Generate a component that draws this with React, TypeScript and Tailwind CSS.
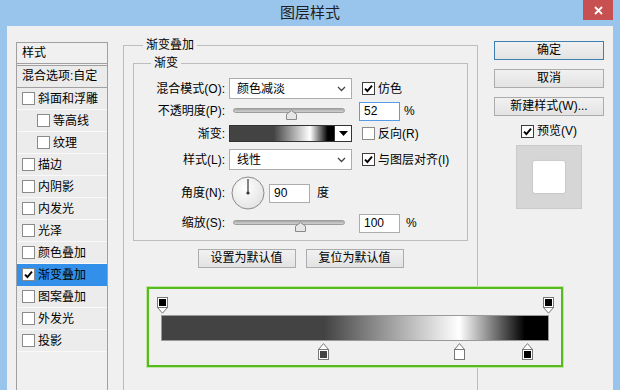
import React from "react";

const GRAD = "bg-[linear-gradient(to_right,#434343_0%,#434343_42%,#ffffff_77%,#000000_94%,#000000_100%)]";

function Check({ on, soft }: { on?: boolean; soft?: boolean }) {
  return (
    <span
      className={
        "inline-flex h-[13px] w-[13px] shrink-0 items-center justify-center border bg-white " +
        (soft ? "border-[#8a8a8a]" : "border-[#3c3c3c]")
      }
    >
      {on && (
        <svg width="9" height="9" viewBox="0 0 9 9">
          <path d="M1 4.6 L3.4 7 L8 1.6" fill="none" stroke="#000" strokeWidth="1.9" />
        </svg>
      )}
    </span>
  );
}

function Select({ value }: { value: string }) {
  return (
    <div className="ml-[4px] flex h-[21px] w-[123px] items-center justify-between border border-[#acacac] bg-white pl-[7px] pr-[5px]">
      <span>{value}</span>
      <svg width="9" height="6" viewBox="0 0 9 6">
        <path d="M1 1 L4.5 4.5 L8 1" fill="none" stroke="#444" strokeWidth="1.3" />
      </svg>
    </div>
  );
}

function Slider({ thumb }: { thumb: number }) {
  return (
    <div className="relative ml-[8px] h-[20px] w-[112px]">
      <div className="absolute left-0 right-0 top-[7px] h-[5px] rounded-full border border-[#9c9c9c] bg-[linear-gradient(#a9a9a9,#d0d0d0)]" />
      <svg className="absolute top-[9px]" style={{ left: thumb }} width="11" height="10" viewBox="0 0 11 10">
        <path d="M0.5 9.5 V4.2 L5.5 0.5 L10.5 4.2 V9.5 Z" fill="#e6e6e6" stroke="#8a8a8a" />
      </svg>
    </div>
  );
}

function Field({ value, focus, ml }: { value: string; focus?: boolean; ml: string }) {
  return (
    <div
      className={
        "flex h-[19px] w-[41px] items-center bg-white pl-[4px] border " +
        ml +
        (focus ? " border-[#569de5]" : " border-[#acacac]")
      }
    >
      {value}
    </div>
  );
}

function Label({ children }: { children: React.ReactNode }) {
  return <div className="w-[91px] shrink-0 text-right">{children}</div>;
}

function Btn({ children, main, w }: { children: React.ReactNode; main?: boolean; w: string }) {
  return (
    <button
      className={
        "h-[19px] border bg-[linear-gradient(#f1f1f1,#e3e3e3)] leading-[17px] text-black " +
        w +
        (main ? " border-[#3c7fb1]" : " border-[#acacac]")
      }
    >
      {children}
    </button>
  );
}

function TopStop({ x }: { x: number }) {
  return (
    <svg className="absolute top-0" style={{ left: x - 5.5 }} width="11" height="17" viewBox="0 0 11 17">
      <path d="M0.5 10.5 H10.5 L5.5 16.2 Z" fill="#fff" stroke="#777" />
      <rect x="0.5" y="0.5" width="10" height="10" fill="#fff" stroke="#777" />
      <rect x="2" y="2" width="7" height="7" fill="#000" />
    </svg>
  );
}

function BottomStop({ x, color }: { x: number; color: string }) {
  return (
    <svg className="absolute top-0" style={{ left: x - 5.5 }} width="11" height="17" viewBox="0 0 11 17">
      <path d="M5.5 0.6 L10.5 6.5 H0.5 Z" fill="#fff" stroke="#777" />
      <rect x="0.5" y="6.5" width="10" height="10" fill="#fff" stroke="#777" />
      <rect x="2" y="8" width="7" height="7" fill={color} />
    </svg>
  );
}

const effects = [
  { t: "斜面和浮雕" },
  { t: "等高线", sub: true },
  { t: "纹理", sub: true },
  { t: "描边" },
  { t: "内阴影" },
  { t: "内发光" },
  { t: "光泽" },
  { t: "颜色叠加" },
  { t: "渐变叠加", on: true },
  { t: "图案叠加" },
  { t: "外发光" },
  { t: "投影" },
];

export default function App() {
  return (
    <div className="relative h-[390px] w-[620px] overflow-hidden bg-[#99c4ec] font-['Liberation_Sans','Noto_Sans_CJK_SC',sans-serif] text-[12px] leading-[16px] text-black">
      {/* title bar */}
      <div className="grid h-[26px] grid-cols-[1fr_auto_1fr] items-center">
        <div />
        <div className="text-[15px] text-[#1e1e1e]">图层样式</div>
        <div className="flex h-full items-start justify-end pr-[7px]">
          <div className="flex h-[20px] w-[30px] items-center justify-center bg-[#c75050]">
            <svg width="9" height="9" viewBox="0 0 9 9">
              <path d="M1 1 L8 8 M8 1 L1 8" stroke="#fff" strokeWidth="1.8" />
            </svg>
          </div>
        </div>
      </div>

      <div className="mx-[7px] flex h-[364px] items-start bg-[#f0f0f0]">
        {/* effects list */}
        <div className="ml-[9px] mt-[16px] h-[400px] w-[92px] shrink-0 border border-[#a0a0a0]">
          <div className="h-[21px] border-b border-[#a0a0a0] pl-[5px] leading-[20px]">样式</div>
          <div className="mt-[1px] h-[23px] overflow-hidden whitespace-nowrap border-y border-[#a0a0a0] bg-[#ebebeb] pl-[5px] leading-[21px]">
            混合选项:自定
          </div>
          {effects.map((e) => (
            <div
              key={e.t}
              className={
                "flex h-[22px] items-center border-b " +
                (e.on ? "border-[#3390ea] bg-[#3390ea]" : "border-[#f9f9f9] bg-[#ececec]") +
                (e.sub ? " pl-[20px]" : " pl-[5px]")
              }
            >
              <Check on={e.on} soft />
              <span className="ml-[3px]">{e.t}</span>
            </div>
          ))}
        </div>

        {/* gradient overlay settings */}
        <div className="ml-[15px] mt-[11px] shrink-0">
          <fieldset className="h-[420px] w-[355px] border border-[#bdbdbd]">
            <legend className="ml-[19px] px-[3px] leading-[16px]">渐变叠加</legend>
            <fieldset className="mx-[9px] mt-[2px] border border-[#bdbdbd] pb-[7px]">
              <legend className="ml-[17px] px-[3px] leading-[16px]">渐变</legend>
              <div className="flex flex-col pt-[7px]">
                <div className="flex h-[21px] items-center">
                  <Label>混合模式(O):</Label>
                  <Select value="颜色减淡" />
                  <div className="ml-[10px] flex items-center gap-[3px]">
                    <Check on />
                    <span>仿色</span>
                  </div>
                </div>
                <div className="mt-[2px] flex h-[20px] items-center">
                  <Label>不透明度(P):</Label>
                  <Slider thumb={53} />
                  <Field value="52" focus ml="ml-[14px]" />
                  <span className="ml-[4px]">%</span>
                </div>
                <div className="mt-[3px] flex h-[19px] items-center">
                  <Label>渐变:</Label>
                  <div className="ml-[4px] flex h-[17px] w-[123px] border border-[#333]">
                    <div className={"flex-1 " + GRAD} />
                    <div className="flex w-[17px] items-center justify-center border-l border-[#333] bg-white">
                      <svg width="9" height="5" viewBox="0 0 9 5">
                        <path d="M0 0 H9 L4.5 5 Z" fill="#000" />
                      </svg>
                    </div>
                  </div>
                  <div className="ml-[10px] flex items-center gap-[3px]">
                    <Check soft />
                    <span>反向(R)</span>
                  </div>
                </div>
                <div className="mt-[6px] flex h-[21px] items-center">
                  <Label>样式(L):</Label>
                  <Select value="线性" />
                  <div className="ml-[10px] flex items-center gap-[3px]">
                    <Check on />
                    <span>与图层对齐(I)</span>
                  </div>
                </div>
                <div className="mt-[6px] flex h-[34px] items-center">
                  <Label>角度(N):</Label>
                  <svg className="ml-[6px]" width="34" height="34" viewBox="0 0 34 34">
                    <defs>
                      <radialGradient id="dial" cx="0.4" cy="0.35" r="0.7">
                        <stop offset="0" stopColor="#ffffff" />
                        <stop offset="1" stopColor="#e2e2e2" />
                      </radialGradient>
                    </defs>
                    <circle cx="17" cy="17" r="16" fill="url(#dial)" stroke="#8c8c8c" />
                    <path d="M17 17 V3" stroke="#555" strokeWidth="1.4" />
                    <circle cx="17" cy="17" r="1.6" fill="#333" />
                  </svg>
                  <Field value="90" ml="ml-[4px]" />
                  <span className="ml-[7px]">度</span>
                </div>
                <div className="mt-[3px] flex h-[20px] items-center">
                  <Label>缩放(S):</Label>
                  <Slider thumb={62} />
                  <Field value="100" ml="ml-[14px]" />
                  <span className="ml-[6px]">%</span>
                </div>
              </div>
            </fieldset>
            <div className="mt-[8px] flex justify-center gap-[10px]">
              <Btn w="w-[98px]">设置为默认值</Btn>
              <Btn w="w-[98px]">复位为默认值</Btn>
            </div>
          </fieldset>
        </div>

        {/* dialog buttons */}
        <div className="ml-[16px] mt-[15px] flex w-[110px] shrink-0 flex-col items-center">
          <Btn main w="w-[110px]">确定</Btn>
          <div className="mt-[9px]">
            <Btn w="w-[110px]">取消</Btn>
          </div>
          <div className="mt-[9px]">
            <Btn w="w-[110px]">新建样式(W)...</Btn>
          </div>
          <div className="mt-[7px] flex h-[16px] items-center gap-[3px]">
            <Check on />
            <span>预览(V)</span>
          </div>
          <div className="mt-[6px] flex h-[64px] w-[66px] items-center justify-center border border-[#cacaca] bg-[#d6d6d6]">
            <div className="h-[32px] w-[32px] rounded-[2px] bg-white shadow-[0_0_2px_rgba(0,0,0,0.2)]" />
          </div>
        </div>
      </div>

      {/* gradient editor, pasted over the dialog */}
      <div className="absolute left-[147px] top-[287px] h-[80px] w-[416px] border-2 border-[#57bb20] bg-[#f0f0f0] pl-[12px] pt-[8px] shadow-[0_0_0_1px_#bfe6a3]">
        <div className="relative h-[17px] w-[388px]">
          <TopStop x={1} />
          <TopStop x={387} />
        </div>
        <div className={"mt-[1px] h-[26px] w-[388px] border border-[#9a9a9a] " + GRAD} />
        <div className="relative mt-[2px] h-[17px] w-[388px]">
          <BottomStop x={162} color="#434343" />
          <BottomStop x={298} color="#ffffff" />
          <BottomStop x={366} color="#000000" />
        </div>
      </div>
    </div>
  );
}
